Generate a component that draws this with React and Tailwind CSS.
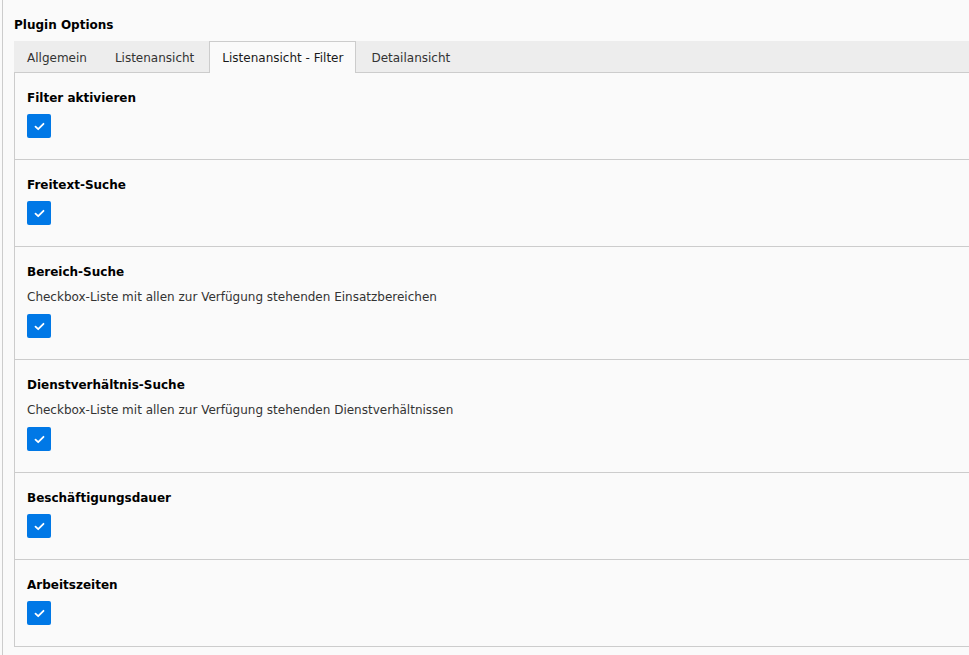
import React from "react";

const tabs = ["Allgemein", "Listenansicht", "Listenansicht - Filter", "Detailansicht"];

const fields = [
  { label: "Filter aktivieren" },
  { label: "Freitext-Suche" },
  { label: "Bereich-Suche", desc: "Checkbox-Liste mit allen zur Verfügung stehenden Einsatzbereichen" },
  { label: "Dienstverhältnis-Suche", desc: "Checkbox-Liste mit allen zur Verfügung stehenden Dienstverhältnissen" },
  { label: "Beschäftigungsdauer" },
  { label: "Arbeitszeiten" },
];

const Checkbox = () => (
  <div className="w-6 h-6 rounded-[2px] bg-[#0078e6] flex items-center justify-center">
    <svg width="11" height="9" viewBox="0 0 11 9" fill="none">
      <path d="M1.5 4.6 L4.2 7.2 L9.5 1.8" stroke="white" strokeWidth="1.8" strokeLinecap="round" strokeLinejoin="round" />
    </svg>
  </div>
);

export default function App() {
  const active = 2;
  return (
    <div
      className="min-h-screen bg-[#fafafa] text-[12px] leading-4 text-[#1a1a1a] overflow-hidden"
      style={{ fontFamily: '"DejaVu Sans", Verdana, sans-serif' }}
    >
      <div className="ml-[2px] border-l border-[#cccccc] min-h-screen pl-[11px] pt-[17px]">
        <h1 className="font-bold text-black mb-[8px]">Plugin Options</h1>

        {/* tab bar */}
        <div className="flex bg-[#ededed] border-b border-[#cccccc]">
          {tabs.map((t, i) =>
            i === active ? (
              <div
                key={t}
                className="mr-[2px] -mb-px border border-b-0 border-[#cccccc] bg-[#fafafa] px-3 pt-[8px] pb-[7px] whitespace-nowrap text-[#1a1a1a]"
              >
                {t}
              </div>
            ) : (
              <div
                key={t}
                className="mr-[2px] border border-transparent border-b-0 px-3 pt-[8px] pb-[6px] whitespace-nowrap text-[#333333]"
              >
                {t}
              </div>
            )
          )}
        </div>

        {/* panel */}
        <div className="border-l border-[#cccccc]">
          {fields.map((f) => (
            <div key={f.label} className="border-b border-[#cccccc] pl-3 pt-[17px] pb-[21px]">
              <div className="font-bold text-black">{f.label}</div>
              {f.desc && <div className="mt-[9px] text-[12px] leading-4 text-[#333333]">{f.desc}</div>}
              <div className={f.desc ? "mt-[9px]" : "mt-[8px]"}>
                <Checkbox />
              </div>
            </div>
          ))}
        </div>
      </div>
    </div>
  );
}
